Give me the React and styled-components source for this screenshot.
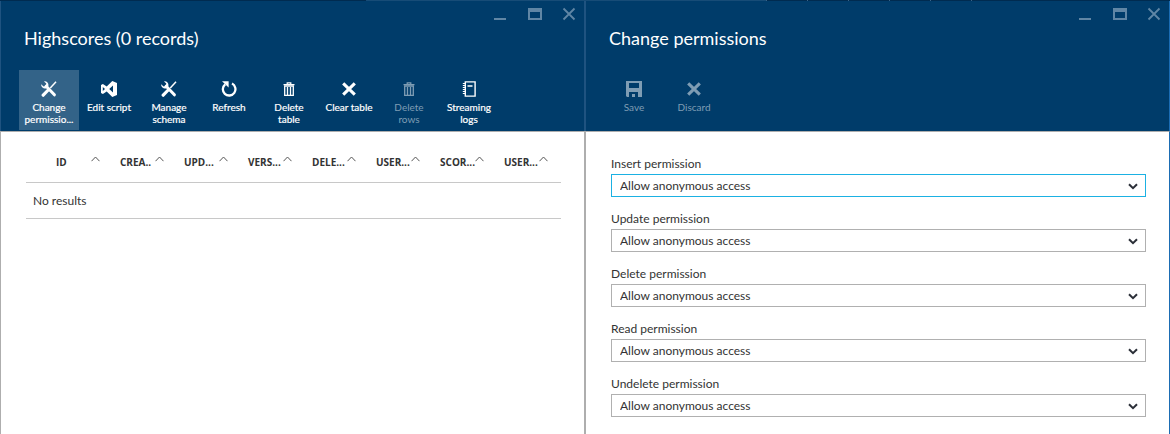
import React, { useState } from "react";
import styled, { createGlobalStyle, css } from "styled-components";

const navy = "#003c6a";
const muted = "#7f9db4";

const GlobalStyle = createGlobalStyle`
  * { box-sizing: border-box; }
  body {
    margin: 0;
    background: #fff;
    color: #333;
    font-family: Lato, "Open Sans", sans-serif;
    font-size: 12px;
    line-height: 16px;
  }
`;

const Page = styled.main`
  display: grid;
  grid-template-columns: 1fr 1fr;
  grid-template-rows: 1px 1fr;
  min-height: 100vh;
`;

const TopStrip = styled.div`
  grid-column: 1 / -1;
  display: grid;
  grid-template-columns: 366fr 400fr 404fr;
  background: #002b50;
`;

const StripLight = styled.div`
  grid-column: 2;
  background: #174c77;
`;

const StripTicks = styled.div`
  grid-column: 3;
  background: repeating-linear-gradient(to right, #3a6387 0 1px, transparent 1px 41px) 0 0 / 206px 1px no-repeat;
`;

const BladeFrame = styled.section`
  display: flex;
  flex-direction: column;
  min-width: 0;
`;

const BladeHeader = styled.header`
  background: ${navy};
  border: solid #1f5380;
  border-width: 0 1px;
  border-right-color: ${(p) => (p.$last ? "#1b6cb3" : "#1f5380")};
  color: #fff;
  height: 130px;
`;

const BladeBody = styled.div`
  flex: 1;
  background: #fff;
  border: 1px solid #aeaeae;
  border-bottom: 0;
  border-right-color: ${(p) => (p.$last ? "#1b6cb3" : "#aeaeae")};
  padding: 0 23px 0 25px;
`;

const WindowControls = styled.div`
  display: flex;
  justify-content: flex-end;
  gap: 14px;
  height: 25px;
  padding: 3px 5px 0 0;
`;

const WindowButton = styled.button`
  display: flex;
  align-items: center;
  justify-content: center;
  width: 20px;
  height: 20px;
  padding: 0;
  border: 0;
  background: none;
  color: #6086a5;
  cursor: pointer;
`;

const BladeTitle = styled.h1`
  margin: 0;
  padding-left: 23px;
  height: 44px;
  font-size: 18px;
  font-weight: 400;
  line-height: 24px;
`;

const CommandBar = styled.div`
  display: flex;
  padding-left: 18px;
`;

const Command = styled.button`
  display: flex;
  flex-direction: column;
  align-items: center;
  width: 60px;
  height: 60px;
  padding: 11px 2px 0;
  border: 0;
  background: ${(p) => (p.$active ? "#336388" : "none")};
  color: #fff;
  font: inherit;
  font-size: 10px;
  line-height: 12px;
  cursor: pointer;

  &:disabled {
    color: ${muted};
    cursor: default;
  }
`;

const CommandLabel = styled.span`
  margin-top: 4px;
  white-space: pre-line;
  text-align: center;
  ${(p) => !p.$muted && css`-webkit-text-stroke: 0.2px currentColor;`}
`;

const Records = styled.table`
  width: 100%;
  table-layout: fixed;
  border-collapse: collapse;
`;

const HeadCell = styled.th`
  width: ${(p) => (p.$first ? "87px" : "auto")};
  height: 50px;
  padding: 11px 13px 0 ${(p) => (p.$first ? "30px" : "7px")};
  border-bottom: 1px solid #c8c8c8;
  font-family: "Open Sans", sans-serif;
  font-size: 10px;
  line-height: 12px;
  text-align: left;
`;

const HeadContent = styled.div`
  display: flex;
  justify-content: space-between;
  white-space: nowrap;
`;

const HeadLabel = styled.span`
  min-width: 0;
  flex: 1;
`;

const EmptyCell = styled.td`
  height: 36px;
  padding: 2px 7px 0;
  border-bottom: 1px solid #c8c8c8;
`;

const Form = styled.form`
  display: grid;
  gap: 15px;
  padding-top: 25px;
`;

const Field = styled.div`
  display: grid;
`;

const FieldLabel = styled.label`
  padding-bottom: 3px;
  line-height: 14px;
`;

const SelectBox = styled.div`
  position: relative;
`;

const Select = styled.select`
  display: block;
  width: 100%;
  height: 23px;
  padding: 0 8px;
  appearance: none;
  border: 1px solid ${(p) => (p.$focused ? "#1bb1e3" : "#b0b0b0")};
  border-radius: 0;
  background: #fff;
  color: #333;
  font: inherit;
  outline: none;
`;

const SelectArrow = styled.svg`
  position: absolute;
  top: 9px;
  right: 8px;
  pointer-events: none;
`;

const icons = {
  tools: (
    <>
      <path d="M15 .8 9.3 7" fill="none" stroke="currentColor" strokeWidth="1.5" />
      <path d="M7.2 9 2.2 14.2" fill="none" stroke="currentColor" strokeWidth="3.2" strokeLinecap="round" />
      <path d="m5.2 5.2 8.2 8.6" fill="none" stroke="currentColor" strokeWidth="3" strokeLinecap="round" />
      <path d="M3 .4a3.8 3.8 0 0 1 4.3 4.8L5 7.4A3.8 3.8 0 0 1 .2 3.2l2.4 2.2 2.2-.6.5-2.2Z" fill="currentColor" />
    </>
  ),
  script: (
    <path fillRule="evenodd" fill="currentColor" d="M11.3 0 16 2v12l-4.7 2-5.6-5.4L1.9 13 0 12V4l1.9-1 3.8 2.4ZM12 4.6 8.2 8l3.8 3.4ZM1.8 5.9v4.2L4 8Z" />
  ),
  refresh: (
    <>
      <path d="M11 2.6a6.3 6.3 0 1 1-6.8.7" fill="none" stroke="currentColor" strokeWidth="2.3" />
      <path d="M1 .2h6.6v6.2Z" fill="currentColor" />
    </>
  ),
  trash: (
    <>
      <path d="M6.2 3V1.8h3.6V3M2.5 3.6h11" fill="none" stroke="currentColor" strokeWidth="1.2" />
      <path d="M3.7 5h8.6v9.4H3.7ZM6.5 6v8M9.5 6v8" fill="none" stroke="currentColor" strokeWidth="1.3" />
    </>
  ),
  cross: <path d="m2.2 2.4 11.6 11.2m0-11.2L2.2 13.6" fill="none" stroke="currentColor" strokeWidth="3.1" />,
  logs: (
    <>
      <path d="M4.3.9h9.8v14.2H4.3ZM6.5 5h5" fill="none" stroke="currentColor" strokeWidth="1.4" />
      <path d="M1.8 2.5H4m-2.2 2H4m-2.2 2H4m-2.2 2H4m-2.2 2H4m-2.2 2H4" fill="none" stroke="currentColor" />
    </>
  ),
  save: (
    <path fillRule="evenodd" fill="currentColor" d="M0 0h16v16H6v-3h3v3h3v-5H3v5H1l-1-1ZM3 2v5h10V2Z" />
  ),
};

const Icon = ({ name }) => (
  <svg width="16" height="16" viewBox="0 0 16 16" aria-hidden="true">{icons[name]}</svg>
);

function Blade({ title, commands, last, children }) {
  return (
    <BladeFrame aria-label={title}>
      <BladeHeader $last={last}>
        <WindowControls>
          <WindowButton aria-label="Minimize">
            <svg width="14" height="14"><path d="M0 11h12v2H0z" fill="currentColor" /></svg>
          </WindowButton>
          <WindowButton aria-label="Maximize">
            <svg width="14" height="14"><path fillRule="evenodd" d="M0 1h14v12H0zM2 5v6h10V5z" fill="currentColor" /></svg>
          </WindowButton>
          <WindowButton aria-label="Close">
            <svg width="14" height="14"><path d="m1.5 1.5 11 11m0-11-11 11" fill="none" stroke="currentColor" strokeWidth="1.8" /></svg>
          </WindowButton>
        </WindowControls>
        <BladeTitle>{title}</BladeTitle>
        <CommandBar role="toolbar">
          {commands.map((c) => (
            <Command key={c.label} $active={c.active} disabled={c.disabled}>
              <Icon name={c.icon} />
              <CommandLabel $muted={c.disabled}>{c.label}</CommandLabel>
            </Command>
          ))}
        </CommandBar>
      </BladeHeader>
      <BladeBody $last={last}>{children}</BladeBody>
    </BladeFrame>
  );
}

const tableCommands = [
  { label: "Change\npermissio...", icon: "tools", active: true },
  { label: "Edit script", icon: "script" },
  { label: "Manage\nschema", icon: "tools" },
  { label: "Refresh", icon: "refresh" },
  { label: "Delete\ntable", icon: "trash" },
  { label: "Clear table", icon: "cross" },
  { label: "Delete\nrows", icon: "trash", disabled: true },
  { label: "Streaming\nlogs", icon: "logs" },
];

const permissionCommands = [
  { label: "Save", icon: "save", disabled: true },
  { label: "Discard", icon: "cross", disabled: true },
];

const columns = ["ID", "CREA..", "UPD...", "VERS...", "DELE...", "USER...", "SCOR...", "USER..."];
const operations = ["Insert", "Update", "Delete", "Read", "Undelete"];

export default function App() {
  const [focused, setFocused] = useState("Insert");
  return (
    <>
      <GlobalStyle />
      <Page>
        <TopStrip>
          <StripLight />
          <StripTicks />
        </TopStrip>
        <Blade title="Highscores (0 records)" commands={tableCommands}>
          <Records>
            <thead>
              <tr>
                {columns.map((name, i) => (
                  <HeadCell key={i} $first={i === 0} scope="col">
                    <HeadContent>
                      <HeadLabel>{name}</HeadLabel>
                      <svg width="9" height="6" viewBox="0 0 9 6" aria-hidden="true">
                        <path d="M.5 5.2 4.5 1l4 4.2" fill="none" stroke="#555" />
                      </svg>
                    </HeadContent>
                  </HeadCell>
                ))}
              </tr>
            </thead>
            <tbody>
              <tr><EmptyCell colSpan={columns.length}>No results</EmptyCell></tr>
            </tbody>
          </Records>
        </Blade>
        <Blade title="Change permissions" commands={permissionCommands} last>
          <Form>
            {operations.map((op) => (
              <Field key={op}>
                <FieldLabel htmlFor={op}>{op} permission</FieldLabel>
                <SelectBox>
                  <Select id={op} $focused={focused === op} onFocus={() => setFocused(op)}>
                    <option>Allow anonymous access</option>
                  </Select>
                  <SelectArrow width="10" height="7" viewBox="0 0 10 7" aria-hidden="true">
                    <path d="m1 1.2 4 4 4-4" fill="none" stroke="#2b2f38" strokeWidth="2" />
                  </SelectArrow>
                </SelectBox>
              </Field>
            ))}
          </Form>
        </Blade>
      </Page>
    </>
  );
}
